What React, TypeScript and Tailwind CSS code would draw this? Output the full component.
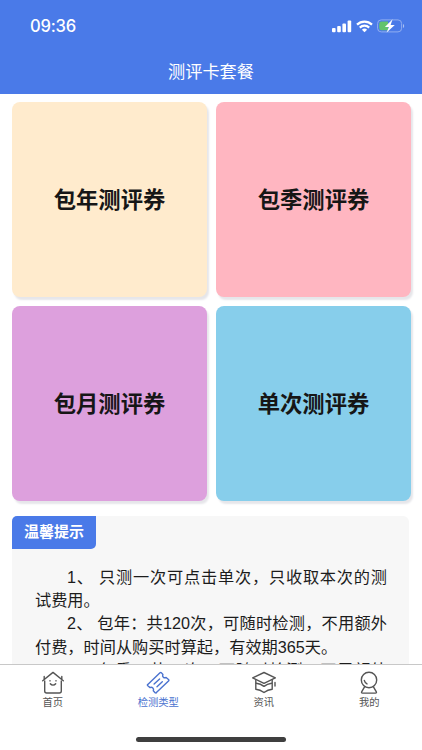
import type { ReactNode } from "react";

const cards = [
  { title: "包年测评券", color: "bg-[#ffebcd]" },
  { title: "包季测评券", color: "bg-[#ffb6c1]" },
  { title: "包月测评券", color: "bg-[#dda0dd]" },
  { title: "单次测评券", color: "bg-[#87ceeb]" },
];

const tips = [
  { text: "1、 只测一次可点击单次，只收取本次的测", indent: true, fill: true },
  { text: "试费用。", indent: false, fill: false },
  { text: "2、 包年：共120次，可随时检测，不用额外", indent: true, fill: true },
  { text: "付费，时间从购买时算起，有效期365天。", indent: false, fill: false },
  { text: "3、 包季：共30次，可随时检测，不用额外", indent: true, fill: true },
];

function StatusBar() {
  return (
    <div className="flex h-[52px] items-center justify-between pl-[30px] pr-[17px] text-white">
      <span className="font-['Inter'] text-[16.6px] font-medium leading-none tracking-[-0.2px]">09:36</span>
      <div className="flex items-center">
        <svg width="20" height="13" viewBox="0 0 20 13" fill="currentColor">
          <rect x="0" y="8" width="3.6" height="4.3" rx="1" />
          <rect x="5.2" y="6" width="3.6" height="6.3" rx="1" />
          <rect x="10.4" y="3.4" width="3.6" height="8.9" rx="1" />
          <rect x="15.6" y="0.5" width="3.6" height="11.8" rx="1" />
        </svg>
        <svg className="ml-1" width="17" height="13" viewBox="0 0 17 13" fill="none" stroke="currentColor" strokeWidth="2.2">
          <path d="M1 4.6a10.7 10.7 0 0 1 15 0" />
          <path d="M3.8 7.6a6.7 6.7 0 0 1 9.4 0" />
          <path d="M8.5 12.3 5.9 9.7a3.7 3.7 0 0 1 5.2 0z" fill="currentColor" stroke="none" />
        </svg>
        <svg className="ml-1" width="28" height="14" viewBox="0 0 28 14">
          <rect x="0.6" y="0.9" width="24" height="12" rx="3.6" fill="none" stroke="#8fadf1" strokeWidth="1" />
          <path d="M4.6 2.5H11v8.8H4.6a2.4 2.4 0 0 1-2.4-2.4v-4a2.4 2.4 0 0 1 2.4-2.4z" fill="#62c36c" />
          <path d="M26 5v4c1.6-.5 1.6-3.5 0-4z" fill="#a9c0f3" />
          <path d="M15.6.3 7.9 8h4L9.6 13.6 17.8 6h-4.2z" fill="#fff" />
        </svg>
      </div>
    </div>
  );
}

function TabIcon({ children }: { children: ReactNode }) {
  return (
    <svg
      width="26"
      height="24"
      viewBox="0 0 26 24"
      fill="none"
      stroke="currentColor"
      strokeWidth="1.4"
      strokeLinecap="round"
      strokeLinejoin="round"
    >
      {children}
    </svg>
  );
}

const tabs = [
  {
    label: "首页",
    active: false,
    icon: (
      <>
        <path d="M2.7 9.7 13 1.4l10.3 8.3M4.2 8V5.5M21.8 8V5.5" />
        <path d="M4.7 10v10a2 2 0 0 0 2 2h12.6a2 2 0 0 0 2-2V10" />
        <path d="M10 9.6v.3M16 9.6v.3M10.3 12.7c1.5 1.9 3.9 1.9 5.4 0" />
      </>
    ),
  },
  {
    label: "检测类型",
    active: true,
    icon: (
      <>
        <path d="M2.8 13.4 15 1.8q.8-.7 1.5.1l1.4 1.6c-1 2.1 1 4 3.2 3l2.4 2q.8.7 0 1.5L11.4 21.6q-.8.7-1.5-.1l-1.6-1.7c1-2.3-1.1-4.1-3.2-3.2l-2.3-1.8q-.8-.7 0-1.4z" />
        <path d="m9.1 13 5.5-5.1M12 15.8l5.3-5" />
      </>
    ),
  },
  {
    label: "资讯",
    active: false,
    icon: (
      <>
        <path d="M1.7 6.9 13 1.5l11.3 5.4L13 12.4z" />
        <path d="M4.8 9v9.2c4 .4 5.4 1.2 8.2 3.3 2.8-2.1 4.2-2.9 8.2-3.3V9M24 11.5V15" />
        <path d="M5.2 12.3c4 .4 5.4 1.2 7.8 3.1 2.4-1.9 4-2.6 7.6-3.1" />
      </>
    ),
  },
  {
    label: "我的",
    active: false,
    icon: (
      <>
        <circle cx="13" cy="9" r="7.7" />
        <path d="M8.3 9.4c.4 1.7 1.2 2.7 2.7 3.5" />
        <path d="m8.7 15.7-2.9 4.9q-.8 1.5.8 1.5h12.8q1.6 0 .8-1.5l-2.9-4.9" />
      </>
    ),
  },
];

export default function App() {
  return (
    <div className="flex h-[750px] w-[422px] flex-col overflow-hidden bg-white font-['Inter','Noto_Sans_CJK_SC',sans-serif]">
      <header className="h-[94px] shrink-0 bg-[#4a7ae8]">
        <StatusBar />
        <h1 className="flex h-[40px] items-center justify-center text-[17.2px] font-normal text-white">测评卡套餐</h1>
      </header>

      <main className="min-h-0 flex-1 overflow-hidden px-3 pt-2">
        <div className="grid grid-cols-[195px_195px] gap-[9px]">
          {cards.map((card) => (
            <div
              key={card.title}
              className={`flex h-[195px] items-center justify-center rounded-[8px] shadow-[2px_3px_2px_#e6e6ea] ${card.color}`}
            >
              <span className="text-[22.3px] font-bold text-[#161616]">{card.title}</span>
            </div>
          ))}
        </div>

        <section className="mr-px mt-[14.5px] h-[190px] rounded-[6px] bg-[#f7f7f7]">
          <h2 className="flex h-[33px] w-[84px] items-center justify-center rounded-tl-[5px] rounded-br-[5px] bg-[#4a7ae8] text-[15px] font-bold text-white">
            温馨提示
          </h2>
          <div className="pl-[23px] pr-[22px] pt-[17px] font-['Liberation_Sans','Noto_Sans_CJK_SC',sans-serif] text-[16.2px] leading-[23.4px] text-[#1c1c1c]">
            {tips.map((tip) => (
              <p
                key={tip.text}
                className={`whitespace-nowrap ${tip.indent ? "pl-[32px]" : ""} ${tip.fill ? "[text-align-last:justify]" : ""}`}
              >
                {tip.text}
              </p>
            ))}
          </div>
        </section>
      </main>

      <nav className="grid h-[86px] shrink-0 grid-cols-4 grid-rows-[63px_23px] border-t border-[#c8c8c8] bg-white">
        {tabs.map((tab) => (
          <div
            key={tab.label}
            className={`flex flex-col items-center pt-[6px] ${tab.active ? "text-[#4a72cf]" : "text-[#555555]"}`}
          >
            <TabIcon>{tab.icon}</TabIcon>
            <span className="text-[10.3px] leading-[14px]">{tab.label}</span>
          </div>
        ))}
        <div className="col-span-4 mt-[9px] h-[5px] w-[150px] justify-self-center rounded-full bg-[#3f3f3f]" />
      </nav>
    </div>
  );
}
